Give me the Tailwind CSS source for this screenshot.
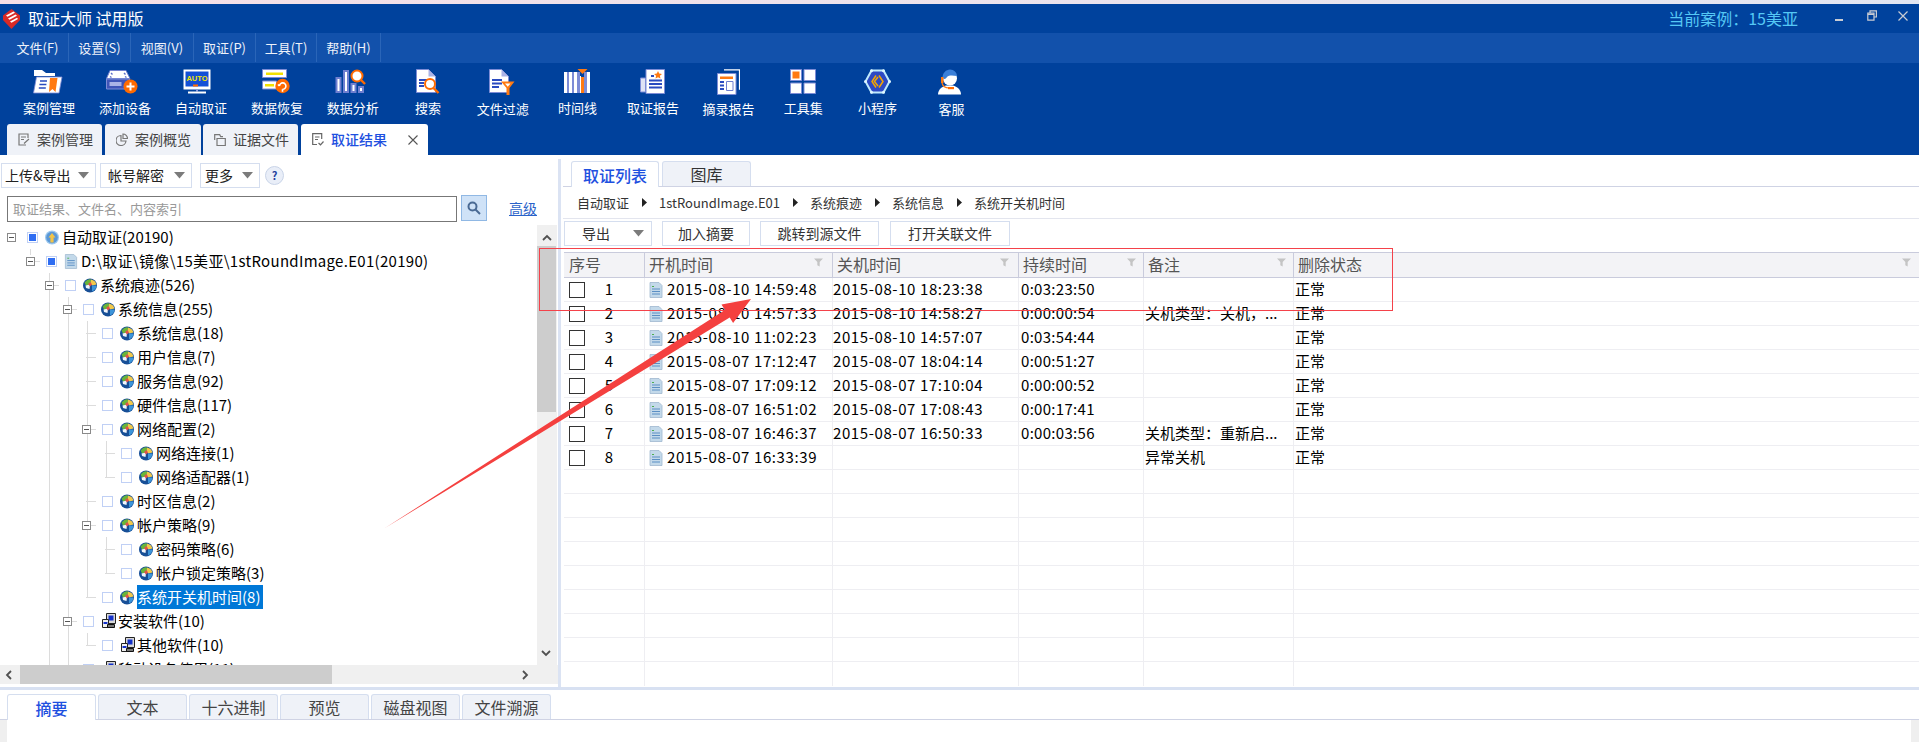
<!DOCTYPE html>
<html lang="zh-CN">
<head>
<meta charset="UTF-8">
<title>取证大师 试用版</title>
<script src="https://cdn.jsdelivr.net/npm/@tailwindcss/browser@4"></script>
</head>
<body class="bg-white">
<svg class="hidden">
  <symbol id="globe" viewBox="0 0 14 14">
    <circle cx="7" cy="7" r="7" fill="#174f96"/>
    <path d="M1.500 4 Q5 0 8 1 L7.500 6 L3 7z" fill="#69b53a"/>
    <path d="M8 1 Q12.500 2 13.500 6 L9 7 L7.500 5z" fill="#f2c94a"/>
    <path d="M2.500 7 L7 6 L6.500 10.500 L3 9.500z" fill="#f1f5fb"/>
    <path d="M9 7 L13.500 7 Q13 11.500 9 13z" fill="#3c95da"/>
    <path d="M5 5.500 L7.500 3.500 L9 6 L7 8z" fill="#e0524a"/>
  </symbol>
  <symbol id="globe0" viewBox="0 0 14 14">
    <circle cx="7" cy="7" r="7" fill="#9cc8ee"/>
    <circle cx="7" cy="7" r="5.800" fill="#5a97d6"/>
    <path d="M7 2.500 L10.500 7 H8.600 V12 H5.400 V7 H3.500z" fill="#f3c447"/>
  </symbol>
  <symbol id="doc" viewBox="0 0 14 16">
    <path d="M1 0.500h9l3 3v12H1z" fill="#c3d9ea" stroke="#9fb8cf" stroke-width=".8"/>
    <path d="M3 7h8M3 9.500h8M3 12h8" stroke="#5b8fc4" stroke-width="1"/>
    <path d="M3 4.500h2" stroke="#4caf50" stroke-width="1"/>
  </symbol>
  <symbol id="soft" viewBox="0 0 15 16">
    <path d="M5 0.500h9v10H5z" fill="#d8d8d8" stroke="#222" stroke-width="1"/>
    <path d="M7 2.500h5v5H7z" fill="#1330c8"/>
    <path d="M1 6.500h6v8H1z" fill="#f1f1f1" stroke="#222" stroke-width="1"/>
    <path d="M2 9h4v2H2z" fill="#1330c8"/>
    <path d="M6 11.500h7v3H6z" fill="#777" stroke="#111" stroke-width="1"/>
  </symbol>
  <symbol id="funnel" viewBox="0 0 10 10">
    <path d="M0 0.500h10L6.300 4.500v5L3.700 8V4.500z" fill="#c4c4c4"/>
  </symbol>
  <symbol id="caret" viewBox="0 0 11 7">
    <path d="M0 0h11L5.500 6.500z" fill="#7b7b7b"/>
  </symbol>
</svg>

<div class="relative w-[1919px] h-[742px] overflow-hidden flex flex-col bg-white text-black font-['Noto_Sans_CJK_SC','Microsoft_YaHei',sans-serif]">

  <!-- 顶部窄条 -->
  <div class="h-[4px] shrink-0 bg-linear-to-r from-[#f6dfe6] to-[#e2e6f2]"></div>

  <!-- 标题栏 -->
  <div class="h-[29px] shrink-0 bg-[#00429d] flex items-center text-white">
    <svg class="ml-[3px] w-[17px] h-[20px] mt-[1px]" viewBox="0 0 17 20">
      <path d="M8.500 0 L17 6.500 V11 L8.500 20 L0 11 V6.500z" fill="#d92a26"/>
      <path d="M3 6.500 L10.500 2.500 L12 3.800 L4.500 7.800z M5 9.500 L12.500 5.500 L14 6.800 L6.500 10.800z M7 12.500 L14 8.800 L15 10 L8.500 13.800z" fill="#fff"/>
    </svg>
    <span class="ml-[8px] text-[16px] leading-none -mt-[1px]">取证大师 试用版</span>
    <span class="ml-auto text-[16px] leading-none text-[#55c8f5] -mt-[2px]">当前案例：15美亚</span>
    <div class="w-[121px] h-full relative">
      <span class="absolute left-[37px] top-[15px] w-[8px] h-[2px] bg-[#c9ccd3]"></span>
      <svg class="absolute left-[69px] top-[6px] w-[10px] h-[11px]" viewBox="0 0 10 11" fill="none" stroke="#c9ccd3" stroke-width="1.200"><path d="M3 3V0.800h6.400V7H7"/><path d="M0.800 3.200h6.200v7H0.800z"/><path d="M0.800 4.400H7"/></svg>
      <svg class="absolute left-[100px] top-[7px] w-[10px] h-[10px]" viewBox="0 0 10 10" stroke="#c9ccd3" stroke-width="1.200"><path d="M0.500 0.500l9 9M9.500 0.500l-9 9"/></svg>
    </div>
  </div>

  <!-- 菜单栏 -->
  <div class="h-[30px] shrink-0 bg-[#1251ab] pl-[7px] flex text-[13px] text-[#eef2fa] [&>span]:flex [&>span]:items-center [&>span]:justify-center [&>span]:border-r [&>span]:border-[#2a65b8] [&>span]:h-[29px]">
    <span class="w-[62px]">文件(F)</span>
    <span class="w-[62px]">设置(S)</span>
    <span class="w-[63px]">视图(V)</span>
    <span class="w-[62px]">取证(P)</span>
    <span class="w-[61px]">工具(T)</span>
    <span class="w-[64px]">帮助(H)</span>
  </div>

  <!-- 工具栏 + 页签 -->
  <div class="h-[92px] shrink-0 bg-[#00419c] flex flex-col">
    <div class="h-[61px] pl-[11px] pt-[6px] flex text-[13px] text-white">
      <div class="w-[76px] flex flex-col items-center gap-[5px]">
        <svg class="w-[30px] h-[25px] -translate-x-[1px]" viewBox="0 0 30 25"><path d="M1 1h8l4 3h9v3H1z" fill="#fff"/><path d="M3.500 8h25.500l-3 16H0.500z" fill="#fff" stroke="#7d8cd6" stroke-width=".8"/><path d="M7 12h7M6.400 15.500h7M5.800 19h7" stroke="#2a4bc0" stroke-width="1.600"/><path d="M17 9h7.500l-2 14-3-3-3.500 3z" fill="#ff7a12"/></svg>
        <span class="leading-[18px]">案例管理</span>
      </div>
      <div class="w-[76px] flex flex-col items-center gap-[5px]">
        <svg class="w-[32px] h-[25px] -translate-x-[3px]" viewBox="0 0 32 25"><path d="M4 1.500h16l4 8H0.500z" fill="#fff" stroke="#6f7fd0"/><path d="M5 4l1.500 1.500M18 4l1.500 1.500M4 7.500l1.500 1M19 7.500l1.500 1" stroke="#5a6cc8" stroke-width="1.400"/><path d="M0.500 10h23v10h-23z" fill="#3f55b8" stroke="#7d8cd6"/><path d="M3.500 13h12v4h-12z" fill="#aab3e6"/><circle cx="24.500" cy="17.500" r="7" fill="#ff6a00"/><path d="M20.500 17.500h8M24.500 13.500v8" stroke="#fff" stroke-width="2"/></svg>
        <span class="leading-[18px]">添加设备</span>
      </div>
      <div class="w-[76px] flex flex-col items-center gap-[5px]">
        <svg class="w-[28px] h-[25px] -translate-x-[4px]" viewBox="0 0 28 25"><path d="M0.500 0.500h27v20h-27z" fill="#fff"/><path d="M2.500 2.500h23v15h-23z" fill="#1450d6"/><text x="14" y="11.500" text-anchor="middle" font-size="7.500" font-weight="700" font-family="Liberation Sans" fill="#f5e400">AUTO</text><path d="M10 15.500h5v2h-5z" fill="#ff6a00"/><path d="M13 20.500h2v2h-2z" fill="#8c9ae0"/><path d="M5 22.500h18v2H5z" fill="#fff"/></svg>
        <span class="leading-[18px]">自动取证</span>
      </div>
      <div class="w-[76px] flex flex-col items-center gap-[5px]">
        <svg class="w-[28px] h-[25px] -translate-x-[1px]" viewBox="0 0 28 25"><path d="M0.500 0.500h24v8h-24z" fill="#fff" stroke="#7d8cd6"/><path d="M4 3.500h17v2.500H4z" fill="#f2e100"/><path d="M0.500 12h14v8h-14z" fill="#fff" stroke="#7d8cd6"/><path d="M3 15h9v2.500H3z" fill="#f2e100"/><circle cx="20.500" cy="17" r="7.200" fill="#ff6a00"/><path d="M17.500 17a3.200 3.200 0 1 1 3 3.300M20.500 20.300v2.500M17.500 17l-1.500-1.500" fill="none" stroke="#fff" stroke-width="1.600"/></svg>
        <span class="leading-[18px]">数据恢复</span>
      </div>
      <div class="w-[75.500px] flex flex-col items-center gap-[5px]">
        <svg class="w-[31px] h-[25px] -translate-x-[2px]" viewBox="0 0 31 25"><path d="M0.500 8h6v16h-6zM8 1h6v23H8zM15.500 14h6v10h-6zM23 17h6v7h-6z" fill="#6f7fd0"/><path d="M2.500 10h2v12h-2zM10 3h2v19h-2zM17.500 16h2v6h-2zM25 19h2v3h-2z" fill="#fff"/><circle cx="22" cy="7" r="5.500" fill="#fff" stroke="#ff6a00" stroke-width="2"/><path d="M26 11l4 4" stroke="#ff6a00" stroke-width="2.400"/></svg>
        <span class="leading-[18px]">数据分析</span>
      </div>
      <div class="w-[75px] flex flex-col items-center gap-[5px]">
        <svg class="w-[24px] h-[25px]" viewBox="0 0 24 25"><path d="M0.500 0.500h12l7 7v16h-19z" fill="#fff" stroke="#7d8cd6"/><path d="M12.500 0.500v7h7z" fill="#aab3e6"/><path d="M3 11h8M3 14h5M3 17h5" stroke="#2a4bc0" stroke-width="1.800"/><circle cx="14" cy="15" r="5" fill="#fff" stroke="#ff6a00" stroke-width="2"/><path d="M17.500 19l5 5" stroke="#ff6a00" stroke-width="2.400"/></svg>
        <span class="leading-[18px]">搜索</span>
      </div>
      <div class="w-[74.500px] flex flex-col items-center gap-[5px]">
        <svg class="w-[26px] h-[26px] -translate-x-[1px]" viewBox="0 0 26 26"><path d="M0.500 0.500h12l7 7v16h-19z" fill="#fff" stroke="#7d8cd6"/><path d="M12.500 0.500v7h7z" fill="#aab3e6"/><path d="M3 11h10M3 14.500h10M3 18h7" stroke="#2a4bc0" stroke-width="1.800"/><path d="M12 12.500h13.500l-5 6.500v7h-3v-7z" fill="#ff7a12"/><path d="M16 14.500h5.500l-2.700 3.200z" fill="#fff"/></svg>
        <span class="leading-[18px]">文件过滤</span>
      </div>
      <div class="w-[75px] flex flex-col items-center gap-[5px]">
        <svg class="w-[26px] h-[25px] -translate-x-[1px]" viewBox="0 0 26 25"><path d="M0 3h3v21H0zM5 3h3v21H5zM10 3h3v21h-3zM23 3h3v21h-3z" fill="#fff"/><path d="M3 3h2v21H3zM8 3h2v21H8zM13 3h3v21h-3zM20 3h3v21h-3z" fill="#7d8cd6"/><path d="M16 7h1v17h-1z" fill="#fff"/><path d="M17 8h3v16h-3z" fill="#ff7a12"/><path d="M13.500 0h10l-5 5z" fill="#ff7a12"/></svg>
        <span class="leading-[18px]">时间线</span>
      </div>
      <div class="w-[76px] flex flex-col items-center gap-[5px]">
        <svg class="w-[25px] h-[25px] -translate-x-[1px]" viewBox="0 0 25 25"><path d="M0.500 9h5v14h-5z" fill="#dfe3f5" stroke="#7d8cd6"/><path d="M6 0.500h18.500v24H6z" fill="#fff" stroke="#7d8cd6"/><path d="M18 2l1.200 2.600 2.800.300-2.100 1.900.6 2.800-2.500-1.400-2.500 1.400.6-2.800-2.100-1.900 2.800-.300z" fill="#ff7a12"/><path d="M11 7h3M9 11.500h13M9 15h13M9 18.500h13" stroke="#2a4bc0" stroke-width="1.800"/></svg>
        <span class="leading-[18px]">取证报告</span>
      </div>
      <div class="w-[75px] flex flex-col items-center gap-[5px]">
        <svg class="w-[23px] h-[26px]" viewBox="0 0 23 26"><path d="M7 0.800h15.500v20" fill="none" stroke="#fff" stroke-width="1.200"/><path d="M0.500 4.500h18.500v21H0.500z" fill="#fff" stroke="#7d8cd6"/><path d="M3 7.500h13v2.500H3z" fill="#ff7a12"/><path d="M3 13h4M3 16.500h4M3 20h4" stroke="#2a4bc0" stroke-width="1.800"/><path d="M9.500 12.500h6.500v9H9.500z" fill="#fff" stroke="#6f7fd0"/></svg>
        <span class="leading-[18px]">摘录报告</span>
      </div>
      <div class="w-[74.500px] flex flex-col items-center gap-[5px]">
        <svg class="w-[26px] h-[25px]" viewBox="0 0 26 25"><path d="M0.500 0.500h11v11h-11z" fill="#fff" stroke="#7d8cd6"/><path d="M2.500 2.500h7v7h-7z" fill="#ff7a12"/><path d="M14 0.500h11.500v11H14zM0.500 14h11v10.500h-11zM14 14h11.500v10.500H14z" fill="#fff" stroke="#7d8cd6"/></svg>
        <span class="leading-[18px]">工具集</span>
      </div>
      <div class="w-[74px] flex flex-col items-center gap-[5px]">
        <svg class="w-[27px] h-[25px]" viewBox="0 0 27 25"><path d="M7.500 1.500h12l6 11-6 11h-12l-6-11z" fill="#2d49c4" stroke="#bfeafc" stroke-width="2"/><circle cx="7.500" cy="1.800" r="1.500" fill="#dff6ff"/><circle cx="19.500" cy="1.800" r="1.500" fill="#dff6ff"/><circle cx="1.500" cy="12.500" r="1.500" fill="#dff6ff"/><circle cx="25.500" cy="12.500" r="1.500" fill="#dff6ff"/><circle cx="7.500" cy="23.200" r="1.500" fill="#dff6ff"/><circle cx="19.500" cy="23.200" r="1.500" fill="#dff6ff"/><path d="M12 6.500l-4 6 4 6M15 6.500l4 6-4 6M14 8l-3.500 4.500 3.500 4.500" fill="none" stroke="#f5a500" stroke-width="1.500"/></svg>
        <span class="leading-[18px]">小程序</span>
      </div>
      <div class="w-[74px] flex flex-col items-center gap-[5px]">
        <svg class="w-[25px] h-[26px] -translate-x-[2px]" viewBox="0 0 25 26"><path d="M1 25.500c0-5 4-8 8-9h7c4 1 8 4 8 9z" fill="#fff"/><circle cx="13" cy="9.500" r="7" fill="#fff"/><path d="M5.500 9c0-5 3.500-8.500 7.500-8.500s7 3 7 6.500c-4-.5-8-1-10 1-1 1.500-2 3-4.500 1z" fill="#3a7fd8"/><path d="M4 8h2.500v6H4z" fill="#ff7a12"/><path d="M5 14c1 4 3 5 7 5" fill="none" stroke="#ff7a12" stroke-width="1.200"/><path d="M11 18h6v2.200h-6z" fill="#ff6a00"/></svg>
        <span class="leading-[18px]">客服</span>
      </div>
    </div>

    <div class="h-[31px] pl-[7px] flex items-end text-[14px] text-[#444]">
      <div class="w-[95px] h-[31px] bg-[#eff2f8] rounded-t-[3px] flex items-center pl-[11px] gap-[7px]">
        <svg class="w-[12px] h-[13px]" viewBox="0 0 12 13" fill="none" stroke="#777" stroke-width="1.200"><path d="M8 12H1V1h9v4"/><path d="M3 4h5M3 6.500h3M6 10.500l5-4.500"/></svg>
        <span>案例管理</span>
      </div>
      <div class="ml-[3px] w-[96px] h-[31px] bg-[#eff2f8] rounded-t-[3px] flex items-center pl-[11px] gap-[7px]">
        <svg class="w-[12px] h-[13px]" viewBox="0 0 12 13" fill="none" stroke="#777" stroke-width="1.200"><path d="M5 2.500a5 5 0 1 0 5 5.500H5z"/><path d="M7 1v4.500h4.500A4.500 4.500 0 0 0 7 1z"/></svg>
        <span>案例概览</span>
      </div>
      <div class="ml-[2px] w-[95px] h-[31px] bg-[#eff2f8] rounded-t-[3px] flex items-center pl-[11px] gap-[7px]">
        <svg class="w-[12px] h-[12px]" viewBox="0 0 12 12" fill="none" stroke="#777" stroke-width="1.200"><path d="M0.700 6V0.700h5l1 2H9"/><path d="M3 4.500h8.300v7H3z"/></svg>
        <span>证据文件</span>
      </div>
      <div class="ml-[3px] w-[127px] h-[31px] bg-white rounded-t-[3px] flex items-center pl-[11px] gap-[7px] relative">
        <svg class="w-[12px] h-[13px]" viewBox="0 0 12 13" fill="none" stroke="#666" stroke-width="1.200"><path d="M5 11.500H0.700V0.700h9V6"/><path d="M3 4h4.500M3 6.500h3M6.500 10l2 1.800 3-3.300"/></svg>
        <span class="text-[#1e50e0] font-medium">取证结果</span>
        <svg class="absolute left-[107px] top-[11px] w-[10px] h-[10px]" viewBox="0 0 10 10" stroke="#555" stroke-width="1.100"><path d="M0.500 0.500l9 9M9.500 0.500l-9 9"/></svg>
      </div>
    </div>
  </div>

  <!-- 主体 -->
  <div class="h-[532px] shrink-0 flex">
    <!-- 左侧 -->
    <div class="w-[558px] shrink-0 flex flex-col">
      <div class="h-[40px] pt-[8px] pl-[1px] flex text-[14px] text-[#222]">
        <div class="w-[95px] h-[25px] border border-[#d5deef] flex items-center pl-[3px] justify-between pr-[6px]"><span>上传&amp;导出</span><svg class="w-[11px] h-[7px]"><use href="#caret"/></svg></div>
        <div class="ml-[4px] w-[92px] h-[25px] border border-[#d5deef] flex items-center pl-[7px] justify-between pr-[6px]"><span>帐号解密</span><svg class="w-[11px] h-[7px]"><use href="#caret"/></svg></div>
        <div class="ml-[8px] w-[60px] h-[25px] border border-[#d5deef] flex items-center pl-[4px] justify-between pr-[6px]"><span>更多</span><svg class="w-[11px] h-[7px]"><use href="#caret"/></svg></div>
        <div class="ml-[5px] w-[19px] h-[19px] mt-[3px] rounded-full bg-[#e9eef8] border border-[#c9d4e8] flex items-center justify-center text-[11px] font-bold text-[#1f3f9e]">?</div>
      </div>
      <div class="h-[30px] flex pl-[7px]">
        <div class="w-[450px] h-[26px] mt-[1px] border border-[#777] flex items-center pl-[5px] text-[13px] text-[#999]">取证结果、文件名、内容索引</div>
        <div class="ml-[4px] w-[26px] h-[26px] bg-[#cfe2f7] border border-[#90b8e4] flex items-center justify-center">
          <svg class="w-[14px] h-[14px]" viewBox="0 0 14 14" fill="none" stroke="#4a6a94" stroke-width="2"><circle cx="5.500" cy="5.500" r="4"/><path d="M8.500 8.500l4.500 4.500"/></svg>
        </div>
        <a class="ml-[22px] text-[14px] leading-[26px] text-[#2a62c9] underline">高级</a>
      </div>
      <div class="h-[440px] flex shrink-0">
        <div id="tree" class="relative w-[537px] h-[440px] overflow-hidden text-[15px]"></div>
        <div class="w-[20px] h-[440px] bg-[#f0f0f0] flex flex-col items-center relative">
          <svg class="mt-[9px] w-[10px] h-[7px]" viewBox="0 0 10 7" fill="none" stroke="#505050" stroke-width="1.800"><path d="M1 6l4-4 4 4"/></svg>
          <div class="absolute left-0 top-[21px] w-[19px] h-[166px] bg-[#cdcdcd]"></div>
          <svg class="absolute top-[425px] left-[4px] w-[10px] h-[7px]" viewBox="0 0 10 7" fill="none" stroke="#505050" stroke-width="1.800"><path d="M1 1l4 4 4-4"/></svg>
        </div>
      </div>
      <div class="h-[19px] bg-[#f0f0f0] flex items-center shrink-0 relative">
        <svg class="absolute left-[5px] top-[5px] w-[7px] h-[10px]" viewBox="0 0 7 10" fill="none" stroke="#505050" stroke-width="1.800"><path d="M6 1L2 5l4 4"/></svg>
        <div class="ml-[20px] w-[312px] h-[19px] bg-[#cdcdcd]"></div>
        <svg class="absolute left-[522px] top-[5px] w-[7px] h-[10px]" viewBox="0 0 7 10" fill="none" stroke="#505050" stroke-width="1.800"><path d="M1 1l4 4-4 4"/></svg>
      </div>
    </div>

    <div class="w-[3px] shrink-0 bg-[#dbe3f3] mt-[4px]"></div>

    <!-- 右侧 -->
    <div class="flex-1 min-w-0 flex flex-col">
      <div class="h-[32px] ml-[2px] pt-[6px] flex border-b border-[#cfd3e4] text-[16px]">
        <div class="ml-[8px] w-[88px] h-[26px] bg-white border border-b-0 border-[#d5deef] rounded-t-[3px] flex items-center justify-center font-medium text-[#1e50e0]">取证列表</div>
        <div class="ml-[3px] w-[89px] h-[25px] bg-[#eff2f8] border border-b-0 border-[#d5deef] rounded-t-[3px] flex items-center justify-center text-[#333]">图库</div>
      </div>
      <div class="h-[32px] ml-[2px] pl-[14px] flex items-center border-b border-[#e3e5ee] text-[13px] text-[#333]">
        <span>自动取证</span><svg class="mx-[12.500px] w-[5px] h-[9px]" viewBox="0 0 5 9"><path d="M0 0l5 4.500L0 9z" fill="#222"/></svg>
        <span>1stRoundImage.E01</span><svg class="mx-[12.500px] w-[5px] h-[9px]" viewBox="0 0 5 9"><path d="M0 0l5 4.500L0 9z" fill="#222"/></svg>
        <span>系统痕迹</span><svg class="mx-[12.500px] w-[5px] h-[9px]" viewBox="0 0 5 9"><path d="M0 0l5 4.500L0 9z" fill="#222"/></svg>
        <span>系统信息</span><svg class="mx-[12.500px] w-[5px] h-[9px]" viewBox="0 0 5 9"><path d="M0 0l5 4.500L0 9z" fill="#222"/></svg>
        <span>系统开关机时间</span>
      </div>
      <div class="h-[33px] ml-[3px] pt-[2px] flex text-[14px] text-[#333]">
        <div class="w-[88px] h-[25px] border border-[#d5deef] flex items-center justify-between pl-[17px] pr-[7px]"><span>导出</span><svg class="w-[11px] h-[7px]"><use href="#caret"/></svg></div>
        <div class="ml-[10px] w-[88px] h-[25px] border border-[#d5deef] flex items-center justify-center">加入摘要</div>
        <div class="ml-[10px] w-[119px] h-[25px] border border-[#d5deef] flex items-center justify-center">跳转到源文件</div>
        <div class="ml-[11px] w-[120px] h-[25px] border border-[#d5deef] flex items-center justify-center">打开关联文件</div>
      </div>
      <div id="table" class="flex-1 min-h-0 ml-[3px] overflow-hidden text-[15px]">
        <div class="h-[26px] flex bg-[#f3f3f6] border-y border-[#c9cbdc] text-[16px] text-[#555]">
          <div class="w-[81px] border-r border-[#c9cbdc] pl-[5px] leading-[23px]">序号</div>
          <div class="w-[188px] border-r border-[#c9cbdc] pl-[4px] leading-[23px] flex justify-between pr-[9px]"><span>开机时间</span><svg class="w-[9px] h-[9px] mt-[5px]"><use href="#funnel"/></svg></div>
          <div class="w-[186px] border-r border-[#c9cbdc] pl-[4px] leading-[23px] flex justify-between pr-[9px]"><span>关机时间</span><svg class="w-[9px] h-[9px] mt-[5px]"><use href="#funnel"/></svg></div>
          <div class="w-[125px] border-r border-[#c9cbdc] pl-[4px] leading-[23px] flex justify-between pr-[7px]"><span>持续时间</span><svg class="w-[9px] h-[9px] mt-[5px]"><use href="#funnel"/></svg></div>
          <div class="w-[150px] border-r border-[#c9cbdc] pl-[4px] leading-[23px] flex justify-between pr-[7px]"><span>备注</span><svg class="w-[9px] h-[9px] mt-[5px]"><use href="#funnel"/></svg></div>
          <div class="flex-1 pl-[4px] leading-[23px] flex justify-between pr-[8px]"><span>删除状态</span><svg class="w-[9px] h-[9px] mt-[5px]"><use href="#funnel"/></svg></div>
        </div>
        <div id="rows"></div>
      </div>
    </div>
  </div>

  <!-- 底部页签 -->
  <div class="flex-1 min-h-0 flex flex-col">
    <div class="h-[3px] bg-[#d8e1f2] shrink-0"></div>
    <div class="h-[3px] shrink-0"></div>
    <div class="h-[26px] shrink-0 pl-[7px] mt-[1px] flex gap-[2px] border-b border-[#cfd3e4] text-[16px] text-[#444]">
      <div class="w-[89px] h-[26px] bg-white border border-b-0 border-[#d5deef] rounded-t-[3px] flex items-center justify-center font-medium text-[#1e50e0]">摘要</div>
      <div class="w-[89px] h-[25px] bg-[#eff2f8] border border-b-0 border-[#d5deef] rounded-t-[3px] flex items-center justify-center">文本</div>
      <div class="w-[89px] h-[25px] bg-[#eff2f8] border border-b-0 border-[#d5deef] rounded-t-[3px] flex items-center justify-center">十六进制</div>
      <div class="w-[89px] h-[25px] bg-[#eff2f8] border border-b-0 border-[#d5deef] rounded-t-[3px] flex items-center justify-center">预览</div>
      <div class="w-[89px] h-[25px] bg-[#eff2f8] border border-b-0 border-[#d5deef] rounded-t-[3px] flex items-center justify-center">磁盘视图</div>
      <div class="w-[89px] h-[25px] bg-[#eff2f8] border border-b-0 border-[#d5deef] rounded-t-[3px] flex items-center justify-center">文件溯源</div>
    </div>
    <div class="flex-1 flex justify-between">
      <div class="w-[7px] bg-[#efefef]"></div>
      <div class="w-[8px] bg-[#efefef]"></div>
    </div>
  </div>

  <!-- 截图标注 -->
  <svg class="absolute left-0 top-0 w-[1919px] h-[742px] pointer-events-none" viewBox="0 0 1919 742">
    <rect x="539.500" y="248.500" width="853" height="62" fill="none" stroke="#f4424a" stroke-width="1"/>
    <path d="M385 528 L729.700 317.600 L733.100 323.100 L751 299 L721.500 304.500 L724.900 310 Z" fill="#f4403f"/>
  </svg>
</div>

<script>
  // 树：[层级, 名称, 是否可折叠, 图标, 是否选中框]
  const treeData = [
    [0, '自动取证(20190)', true, 'globe0', true],
    [1, 'D:\\取证\\镜像\\15美亚\\1stRoundImage.E01(20190)', true, 'doc', true],
    [2, '系统痕迹(526)', true, 'globe'],
    [3, '系统信息(255)', true, 'globe'],
    [4, '系统信息(18)', false, 'globe'],
    [4, '用户信息(7)', false, 'globe'],
    [4, '服务信息(92)', false, 'globe'],
    [4, '硬件信息(117)', false, 'globe'],
    [4, '网络配置(2)', true, 'globe'],
    [5, '网络连接(1)', false, 'globe'],
    [5, '网络适配器(1)', false, 'globe'],
    [4, '时区信息(2)', false, 'globe'],
    [4, '帐户策略(9)', true, 'globe'],
    [5, '密码策略(6)', false, 'globe'],
    [5, '帐户锁定策略(3)', false, 'globe'],
    [4, '系统开关机时间(8)', false, 'globe'],
    [3, '安装软件(10)', true, 'soft'],
    [4, '其他软件(10)', false, 'soft'],
    [3, '移动设备使用(11)', true, 'soft']
  ];
  // 竖向连接线：[x, y1, y2]，相对整页
  const guides = [[30,249,255],[49,273,665],[68,297,665],[87,321,598],[106,441,478],[106,537,574],[87,633,646]];

  const tree = document.getElementById('tree');
  let treeHtml = guides.map(g =>
    `<span class="absolute w-px bg-[#dcdcdc]" style="left:${g[0]}px;top:${g[1]-225}px;height:${g[2]-g[1]}px"></span>`
  ).join('');
  treeData.forEach(([lvl, name, expand, icon, on]) => {
    const selected = name.startsWith('系统开关机时间');
    const iconClass = icon === 'soft' ? 'w-[16px] h-[16px]' : 'w-[14px] h-[15px]';
    const labelGap = icon === 'soft' ? 'ml-[1px]' : 'ml-[3px]';
    treeHtml += `<div class="relative h-6 flex items-center pl-[7px] whitespace-nowrap" style="margin-left:${Math.round(lvl*18.8)}px">
      <div class="relative w-[20px] h-[9px] shrink-0">
        ${lvl > 0 ? '<span class="absolute left-[4px] top-[4px] w-[10px] h-px bg-[#dcdcdc]"></span>' : ''}
        ${expand ? '<span class="absolute left-0 top-0 w-[9px] h-[9px] border border-[#8a8a8a] bg-white"><span class="absolute left-[1px] top-[3px] w-[5px] h-px bg-[#555]"></span></span>' : ''}
      </div>
      <span class="w-[11px] h-[11px] shrink-0 border border-[#c0d0f5] bg-white flex items-center justify-center">${on ? '<span class="w-[7px] h-[7px] bg-[#2f6df2]"></span>' : ''}</span>
      <svg class="ml-[7px] ${iconClass} shrink-0"><use href="#${icon}"/></svg>
      <span class="${labelGap} h-6 leading-6 ${selected ? 'bg-[#0078d7] text-white pr-[3px]' : ''} ${lvl === 1 ? 'tracking-[0.3px]' : ''}">${name}</span>
    </div>`;
  });
  tree.insertAdjacentHTML('beforeend', treeHtml);

  const tableData = [
    ['2015-08-10 14:59:48','2015-08-10 18:23:38','0:03:23:50',''],
    ['2015-08-10 14:57:33','2015-08-10 14:58:27','0:00:00:54','关机类型：关机，...'],
    ['2015-08-10 11:02:23','2015-08-10 14:57:07','0:03:54:44',''],
    ['2015-08-07 17:12:47','2015-08-07 18:04:14','0:00:51:27',''],
    ['2015-08-07 17:09:12','2015-08-07 17:10:04','0:00:00:52',''],
    ['2015-08-07 16:51:02','2015-08-07 17:08:43','0:00:17:41',''],
    ['2015-08-07 16:46:37','2015-08-07 16:50:33','0:00:03:56','关机类型：重新启...'],
    ['2015-08-07 16:33:39','','','异常关机']
  ];
  let rowsHtml = '';
  for (let i = 0; i < 17; i++) {
    const r = tableData[i];
    rowsHtml += `<div class="h-6 flex items-center ${i < 16 ? 'border-b border-[#eeeef2]' : ''} whitespace-nowrap">
      <div class="w-[81px] h-full border-r border-[#eeeef2] flex items-center pl-[5px]">${r ? `<span class="w-[16px] h-[16px] border border-[#333] bg-white"></span><span class="w-[48px] text-center">${i+1}</span>` : ''}</div>
      <div class="w-[188px] h-full border-r border-[#eeeef2] flex items-center pl-[4px]">${r ? `<svg class="w-[14px] h-[16px] shrink-0"><use href="#doc"/></svg><span class="ml-[4px] tracking-[0.6px]">${r[0]}</span>` : ''}</div>
      <div class="w-[186px] h-full border-r border-[#eeeef2] flex items-center tracking-[0.6px]">${r ? r[1] : ''}</div>
      <div class="w-[125px] h-full border-r border-[#eeeef2] flex items-center pl-[2px] tracking-[0.3px]">${r ? r[2] : ''}</div>
      <div class="w-[150px] h-full border-r border-[#eeeef2] flex items-center pl-[1px]">${r ? r[3] : ''}</div>
      <div class="flex-1 pl-[1px]">${r ? '正常' : ''}</div>
    </div>`;
  }
  document.getElementById('rows').innerHTML = rowsHtml;
</script>
</body>
</html>
